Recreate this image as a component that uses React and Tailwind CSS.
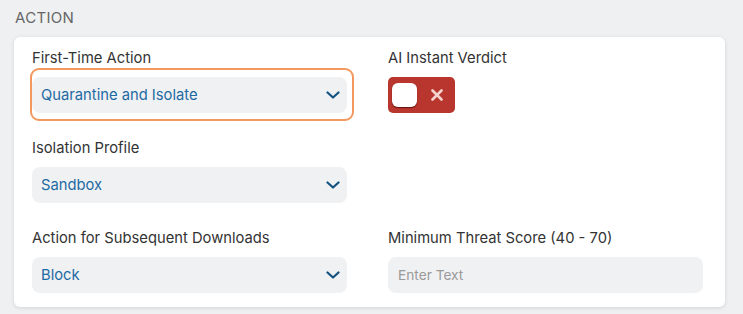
import React from "react";

const Chevron = () => (
  <svg width="14" height="8" viewBox="0 0 14 8" fill="none" className="shrink-0">
    <path d="M1.5 1.5 L7 6.5 L12.5 1.5" stroke="#15527f" strokeWidth="2.2" strokeLinecap="round" strokeLinejoin="round" />
  </svg>
);

const Select = ({ value }) => (
  <div className="h-[36px] rounded-[8px] bg-[#f0f1f3] flex items-center justify-between pl-[9px] pr-[7px]">
    <span className="text-[14.75px] text-[#1d6aa3]">{value}</span>
    <Chevron />
  </div>
);

const Label = ({ children }) => (
  <div className="h-[20px] leading-[20px] text-[14.75px] text-[#333333] mb-[9px]">{children}</div>
);

export default function App() {
  return (
    <div
      className="w-[743px] h-[314px] bg-[#eff0f2] overflow-hidden"
      style={{ fontFamily: "Inter, 'Noto Sans', sans-serif" }}
    >
      <div className="pl-[15px] pt-[8px] h-[37px] leading-[20px] text-[15px] tracking-[0.3px] text-[#666666] uppercase">
        Action
      </div>
      <div className="ml-[14px] w-[711px] h-[270px] bg-white rounded-[6px] shadow-[0_1px_4px_rgba(0,0,0,0.12)] pl-[18px] pt-[11px]">
        <div className="grid grid-cols-[315px_315px] gap-x-[41px] gap-y-[25px]">
          <div>
            <Label>First-Time Action</Label>
            <div className="relative">
              <div className="absolute left-[-2px] top-[-9px] right-[-7px] bottom-[-8px] border-2 border-[#f3995f] rounded-[9px]" />
              <Select value="Quarantine and Isolate" />
            </div>
          </div>
          <div>
            <Label>AI Instant Verdict</Label>
            <div className="w-[67px] h-[36px] rounded-[5px] bg-[#b8362e] flex items-center pl-[4px]">
              <div className="w-[25px] h-[24px] rounded-[6px] bg-white shadow-[0_1px_1px_rgba(60,0,0,0.7)]" />
              <svg width="12" height="12" viewBox="0 0 12 12" className="ml-[14px]">
                <path d="M1.5 1.5 L10.5 10.5 M10.5 1.5 L1.5 10.5" stroke="#f4d3cf" strokeWidth="2.6" strokeLinecap="round" />
              </svg>
            </div>
          </div>
          <div>
            <Label>Isolation Profile</Label>
            <Select value="Sandbox" />
          </div>
          <div />
          <div>
            <Label>Action for Subsequent Downloads</Label>
            <Select value="Block" />
          </div>
          <div>
            <Label>Minimum Threat Score (40 - 70)</Label>
            <div className="h-[36px] rounded-[8px] bg-[#f0f1f3] flex items-center pl-[10px]">
              <span className="text-[13.7px] text-[#9a9a9a]">Enter Text</span>
            </div>
          </div>
        </div>
      </div>
    </div>
  );
}
